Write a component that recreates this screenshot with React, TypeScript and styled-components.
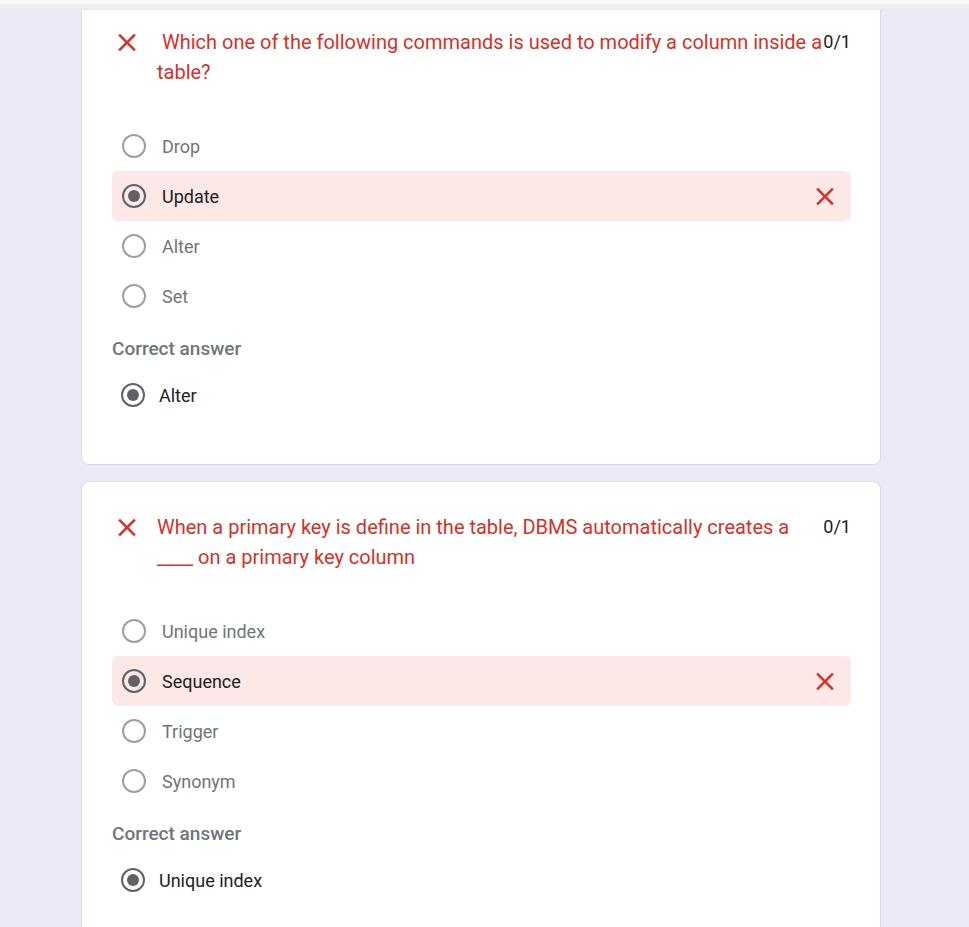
import React from "react";
import styled, { createGlobalStyle } from "styled-components";

const GlobalStyle = createGlobalStyle`
  html, body {
    margin: 0;
    padding: 0;
    background: #ede9f7;
    font-family: Roboto, "Noto Sans", Arial, sans-serif;
    overflow: hidden;
  }
`;

const TopStrip = styled.div`
  position: fixed;
  top: 0;
  left: 0;
  right: 0;
  height: 10px;
  z-index: 2;
  background: linear-gradient(
    to bottom,
    #f8f8f8 0px,
    #f8f8f8 4px,
    #eeeeee 4px,
    #eeeeee 9px,
    #e6e6e6 9px,
    #e6e6e6 10px
  );
`;

const Page = styled.div`
  display: flex;
  flex-direction: column;
  gap: 16px;
  width: 800px;
  margin-left: 81px;
  margin-top: -4px;
`;

const Card = styled.section`
  background: #ffffff;
  border: 1px solid #dadce0;
  border-radius: 8px;
  padding: 30px 29px 47px 30px;
  box-sizing: border-box;
  width: 800px;
`;

const Header = styled.div`
  display: flex;
  align-items: flex-start;
`;

const IconBox = styled.div`
  width: 30px;
  height: 30px;
  flex: 0 0 30px;
  display: flex;
  align-items: center;
  justify-content: center;
  margin-right: 15px;
`;

const QuestionText = styled.div`
  flex: 1;
  color: #d93025;
  font-size: 20px;
  line-height: 30px;
`;

const Score = styled.div`
  flex: 0 0 auto;
  color: #202124;
  font-size: 18px;
  line-height: 30px;
  margin-left: 1px;
`;

const Options = styled.div`
  display: flex;
  flex-direction: column;
  margin-top: 34px;
`;

const OptionRow = styled.div<{ $wrong?: boolean }>`
  display: flex;
  align-items: center;
  height: 50px;
  padding: 0 10px;
  border-radius: 6px;
  background: ${(p) => (p.$wrong ? "#fce8e6" : "transparent")};
`;

const Radio = styled.span<{ $checked?: boolean }>`
  box-sizing: border-box;
  width: 24px;
  height: 24px;
  flex: 0 0 24px;
  border-radius: 50%;
  border: 2px solid ${(p) => (p.$checked ? "#5f6368" : "#9aa0a6")};
  display: flex;
  align-items: center;
  justify-content: center;
  &::after {
    content: "";
    display: ${(p) => (p.$checked ? "block" : "none")};
    width: 12px;
    height: 12px;
    border-radius: 50%;
    background: #5f6368;
  }
`;

const OptionLabel = styled.span<{ $active?: boolean }>`
  flex: 1;
  margin-left: 16px;
  font-size: 18px;
  color: ${(p) => (p.$active ? "#202124" : "#70757a")};
`;

const WrongMark = styled.span`
  display: flex;
  align-items: center;
  justify-content: center;
  width: 30px;
  margin-right: 1px;
`;

const CorrectLabel = styled.div`
  margin-top: 16px;
  font-size: 19px;
  line-height: 24px;
  font-weight: 500;
  color: #70757a;
`;

const CorrectRow = styled.div`
  display: flex;
  align-items: center;
  height: 44px;
  margin-top: 12px;
  padding-left: 9px;
`;

const CorrectText = styled.span`
  margin-left: 14px;
  font-size: 18px;
  color: #202124;
`;

const CloseIcon = () => (
  <svg width="31" height="31" viewBox="0 0 24 24" aria-hidden="true">
    <path
      fill="#d93025"
      d="M19 6.41L17.59 5 12 10.59 6.41 5 5 6.41 10.59 12 5 17.59 6.41 19 12 13.41 17.59 19 19 17.59 13.41 12z"
    />
  </svg>
);

type Question = {
  text: string;
  options: string[];
  chosen: number;
  correct: string;
};

const questions: Question[] = [
  {
    text: "\u00a0Which one of the following commands is used to modify a column inside a table?",
    options: ["Drop", "Update", "Alter", "Set"],
    chosen: 1,
    correct: "Alter",
  },
  {
    text: "When a primary key is define in the table, DBMS automatically creates a ____ on a primary key column",
    options: ["Unique index", "Sequence", "Trigger", "Synonym"],
    chosen: 1,
    correct: "Unique index",
  },
];

const QuestionCard = ({ q }: { q: Question }) => (
  <Card>
    <Header>
      <IconBox>
        <CloseIcon />
      </IconBox>
      <QuestionText>{q.text}</QuestionText>
      <Score>0/1</Score>
    </Header>
    <Options>
      {q.options.map((o, i) => {
        const chosen = i === q.chosen;
        return (
          <OptionRow key={o} $wrong={chosen}>
            <Radio $checked={chosen} />
            <OptionLabel $active={chosen}>{o}</OptionLabel>
            {chosen && (
              <WrongMark>
                <CloseIcon />
              </WrongMark>
            )}
          </OptionRow>
        );
      })}
    </Options>
    <CorrectLabel>Correct answer</CorrectLabel>
    <CorrectRow>
      <Radio $checked />
      <CorrectText>{q.correct}</CorrectText>
    </CorrectRow>
  </Card>
);

export default function App() {
  return (
    <>
      <GlobalStyle />
      <TopStrip />
      <Page>
        {questions.map((q, i) => (
          <QuestionCard key={i} q={q} />
        ))}
      </Page>
    </>
  );
}
